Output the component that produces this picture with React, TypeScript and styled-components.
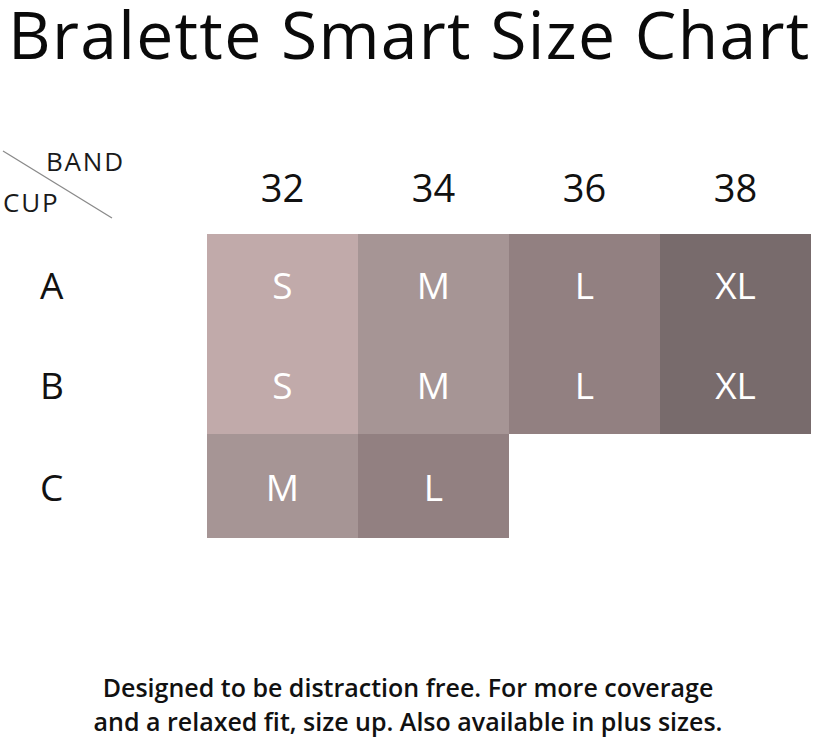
import styled, { createGlobalStyle } from 'styled-components';
import type { JSX } from 'react';

const GlobalStyle = createGlobalStyle`
  body {
    margin: 0;
    background: #ffffff;
    font-family: 'Open Sans', 'Noto Sans', sans-serif;
    color: #111111;
  }
`;

const bands = ['32', '34', '36', '38'];

const rows: { cup: string; sizes: string[] }[] = [
  { cup: 'A', sizes: ['S', 'M', 'L', 'XL'] },
  { cup: 'B', sizes: ['S', 'M', 'L', 'XL'] },
  { cup: 'C', sizes: ['M', 'L'] },
];

const shades: Record<string, string> = {
  S: '#c1aaaa',
  M: '#a69595',
  L: '#928081',
  XL: '#786b6c',
};

export default function App(): JSX.Element {
  return (
    <Page>
      <GlobalStyle />
      <Title>Bralette Smart Size Chart</Title>

      <Chart>
        <Corner>
          <Diagonal viewBox="0 0 120 80" aria-hidden>
            <line x1="3" y1="3" x2="112" y2="70" stroke="#8a8a8a" strokeWidth="1.3" />
          </Diagonal>
          <BandLabel>BAND</BandLabel>
          <CupLabel>CUP</CupLabel>
        </Corner>
        {bands.map((b) => (
          <BandHead key={b}>{b}</BandHead>
        ))}

        {rows.map((row) => (
          <Row key={row.cup}>
            <CupHead>{row.cup}</CupHead>
            {row.sizes.map((s, i) => (
              <SizeCell key={i} $shade={shades[s]}>
                {s}
              </SizeCell>
            ))}
          </Row>
        ))}
      </Chart>

      <Note>
        Designed to be distraction free. For more coverage
        <br />
        and a relaxed fit, size up. Also available in plus sizes.
      </Note>
    </Page>
  );
}

const Page = styled.div`
  width: 816px;
  height: 746px;
  display: flex;
  flex-direction: column;
  overflow: hidden;
`;

const Title = styled.h1`
  margin: 0;
  padding-left: 8px;
  font-size: 66px;
  line-height: 66px;
  font-weight: 500;
  letter-spacing: 1.3px;
  color: #0a0a0a;
  white-space: nowrap;
`;

const Chart = styled.div`
  margin-top: 74px;
  display: grid;
  grid-template-columns: 207px repeat(4, 151px);
  grid-template-rows: 94px 100px 100px 104px;
`;

const Row = styled.div`
  display: contents;
`;

const Corner = styled.div`
  position: relative;
  display: flex;
  flex-direction: column;
  justify-content: flex-start;
  padding-top: 7px;
  font-size: 26px;
  line-height: 28px;
  letter-spacing: 1.8px;
  color: #1a1a1a;
`;

const Diagonal = styled.svg`
  position: absolute;
  left: 0;
  top: 8px;
  width: 120px;
  height: 80px;
`;

const BandLabel = styled.span`
  padding-left: 46px;
`;

const CupLabel = styled.span`
  margin-top: 13px;
  padding-left: 3px;
`;

const BandHead = styled.div`
  display: flex;
  align-items: center;
  justify-content: center;
  font-size: 38px;
  color: #111111;
`;

const CupHead = styled.div`
  display: flex;
  align-items: center;
  padding-left: 40px;
  font-size: 37px;
  color: #111111;
`;

const SizeCell = styled.div<{ $shade: string }>`
  display: flex;
  align-items: center;
  justify-content: center;
  background: ${(p): string => p.$shade};
  color: #ffffff;
  font-size: 37px;
`;

const Note = styled.p`
  margin: auto 0 8px;
  text-align: center;
  font-size: 25px;
  line-height: 34px;
  font-weight: 600;
  color: #111111;
`;
